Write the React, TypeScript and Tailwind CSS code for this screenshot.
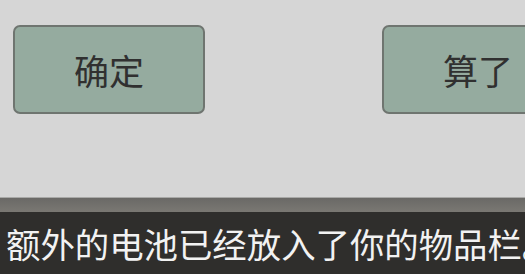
const cjk = "font-['Noto_Sans_CJK_SC','Noto_Sans',sans-serif]";

function DialogButton({ label }: { label: string }) {
  return (
    <button
      className={`flex h-[89px] w-[192px] shrink-0 items-center justify-center rounded-[7px] border-2 border-[#6f7570] bg-[#95ab9f] text-[35px] leading-none text-[#303030] ${cjk}`}
    >
      {label}
    </button>
  );
}

export default function App() {
  return (
    <div className="flex h-[274px] w-[525px] flex-col overflow-hidden bg-[#d6d6d6]">
      <div className="flex h-[197px] shrink-0 gap-[177px] pl-[13px] pt-[25px]">
        <DialogButton label="确定" />
        <DialogButton label="算了" />
      </div>
      <div className="h-px shrink-0 bg-[#a9a9a7]" />
      <div className="h-[14px] shrink-0 bg-gradient-to-b from-[#6a6966] to-[#7a7873]" />
      <div
        className={`flex flex-1 items-center overflow-hidden whitespace-nowrap bg-[#2f2e2c] pl-[6px] text-[34.4px] leading-none text-[#f2f2f2] ${cjk}`}
      >
        额外的电池已经放入了你的物品栏。
      </div>
    </div>
  );
}
